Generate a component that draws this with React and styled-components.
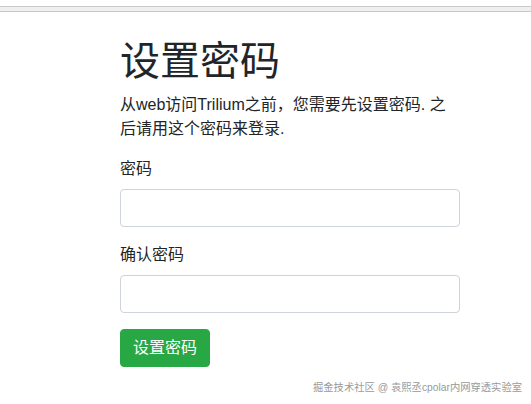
import React from "react";
import styled, { createGlobalStyle } from "styled-components";

const Global = createGlobalStyle`
  html, body { margin: 0; padding: 0; background: #fff; }
  body {
    font-family: "Liberation Sans", "Noto Sans CJK SC", sans-serif;
    font-size: 16px;
    line-height: 1.5;
    color: #212529;
    width: 531px;
    height: 404px;
    overflow: hidden;
    position: relative;
  }
  * { box-sizing: border-box; }
`;

const TopStrip = styled.div`
  margin-top: 6px;
  height: 6px;
  background: #efefef;
  border-top: 1px solid #c8c8c8;
  border-bottom: 1px solid #c8c8c8;
`;

const Container = styled.div`
  width: 340px;
  margin-left: 120px;
  padding-top: 25px;
`;

const Title = styled.h1`
  margin: 0 0 8px;
  font-size: 40px;
  font-weight: 400;
  line-height: 1.2;
`;

const Intro = styled.p`
  margin: 0 0 16px;
`;

const FormGroup = styled.div`
  margin-bottom: 16px;
`;

const Label = styled.label`
  display: inline-block;
  margin-bottom: 8px;
`;

const Input = styled.input`
  display: block;
  width: 100%;
  height: 38px;
  padding: 6px 12px;
  font-size: 16px;
  border: 1px solid #ced4da;
  border-radius: 4px;
  background: #fff;
  outline: none;
`;

const Button = styled.button`
  display: inline-block;
  height: 38px;
  padding: 6px 12px;
  font-family: inherit;
  font-size: 16px;
  line-height: 1.5;
  color: #fff;
  background: #28a745;
  border: 1px solid #28a745;
  border-radius: 4px;
`;

const Watermark = styled.div`
  position: absolute;
  right: 9px;
  bottom: 10px;
  font-size: 10.3px;
  line-height: 12px;
  color: #9a9a9a;
  white-space: nowrap;
`;

export default function App() {
  return (
    <>
      <Global />
      <TopStrip />
      <Container>
        <Title>设置密码</Title>
        <Intro>从web访问Trilium之前，您需要先设置密码. 之后请用这个密码来登录.</Intro>
        <FormGroup>
          <Label htmlFor="password1">密码</Label>
          <Input id="password1" type="password" />
        </FormGroup>
        <FormGroup>
          <Label htmlFor="password2">确认密码</Label>
          <Input id="password2" type="password" />
        </FormGroup>
        <Button type="button">设置密码</Button>
      </Container>
      <Watermark>掘金技术社区 @ 袁熙丞cpolar内网穿透实验室</Watermark>
    </>
  );
}
